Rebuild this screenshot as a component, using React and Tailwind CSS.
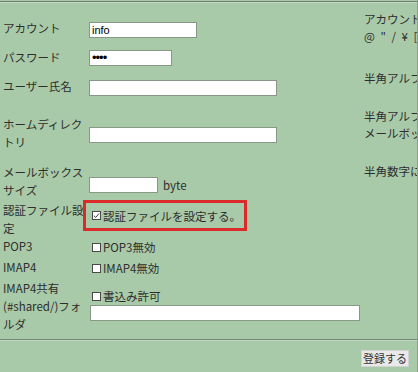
// Account settings form — green panel with a red highlight on the auth-file row.
import React from 'react'

function Check({ checked }) {
  return (
    <span className="inline-flex h-[9px] w-[9px] shrink-0 items-center justify-center border border-[#4a4a4a] bg-white">
      {checked && (
        <svg viewBox="0 0 8 8" className="h-[7px] w-[7px]" fill="none">
          <path d="M1 4.2 L3.1 6.2 L7 1.6" stroke="#333" strokeWidth="1.1" />
        </svg>
      )}
    </span>
  )
}

const field =
  "block h-[16px] border border-[#879886] bg-white px-[2px] text-[11px] text-black font-['Liberation_Sans',sans-serif] outline-none"

export default function App() {
  return (
    <div className="h-[372px] w-[418px] overflow-hidden border-r border-[#8b9d89] bg-[#a9caa8] font-['Noto_Sans_CJK_JP',sans-serif] text-[11.5px] text-[#2e2e2e]">
      <div className="mt-px h-px bg-[#6f806e]" />
      <div className="h-px bg-[#c3dac2]" />

      <div className="flex">
        <div className="w-[364px] shrink-0 leading-[18px]">
          <div className="flex h-[41px]">
            <div className="mt-[16px] w-[83px] whitespace-nowrap pl-[3px]">アカウント</div>
            <div className="ml-[6px] mt-[19px]">
              <input className={`${field} w-[108px]`} defaultValue="info" readOnly />
            </div>
          </div>

          <div className="flex h-[29px]">
            <div className="mt-[4px] w-[83px] whitespace-nowrap pl-[3px]">パスワード</div>
            <div className="ml-[6px] mt-[6px]">
              <input
                type="password"
                className={`${field} w-[83px] !text-[13px] tracking-[-1px]`}
                defaultValue="abcd"
                readOnly
              />
            </div>
          </div>

          <div className="flex h-[35px]">
            <div className="mt-[4px] w-[83px] whitespace-nowrap pl-[3px]">ユーザー氏名</div>
            <div className="ml-[6px] mt-[7px]">
              <input className={`${field} w-[188px]`} readOnly />
            </div>
          </div>

          <div className="flex h-[50px]">
            <div className="mt-[7px] w-[83px] whitespace-nowrap pl-[3px]">
              ホームディレク<br />トリ
            </div>
            <div className="ml-[6px] mt-[19px]">
              <input className={`${field} w-[188px]`} readOnly />
            </div>
          </div>

          <div className="flex h-[40px]">
            <div className="mt-[5px] w-[83px] whitespace-nowrap pl-[3px]">
              メールボックス<br />サイズ
            </div>
            <div className="ml-[6px] mt-[14px] flex items-center gap-[5px]">
              <input className={`${field} w-[69px]`} readOnly />
              <span>byte</span>
            </div>
          </div>

          <div className="flex h-[38px]">
            <div className="mt-[3px] w-[83px] whitespace-nowrap pl-[3px]">
              認証ファイル設<br />定
            </div>
            <div className="mt-[2px] flex h-[31px] w-[164px] items-center gap-[2px] border-[3px] border-[#dc2a2b] pl-[6px]">
              <Check checked />
              <span className="whitespace-nowrap">認証ファイルを設定する。</span>
            </div>
          </div>

          <div className="flex h-[21px]">
            <div className="mt-px w-[83px] whitespace-nowrap pl-[3px]">POP3</div>
            <div className="ml-[9px] mt-px flex items-center gap-[2px]">
              <Check />
              <span>POP3無効</span>
            </div>
          </div>

          <div className="flex h-[21px]">
            <div className="mt-px w-[83px] whitespace-nowrap pl-[3px]">IMAP4</div>
            <div className="ml-[9px] mt-px flex items-center gap-[2px]">
              <Check />
              <span>IMAP4無効</span>
            </div>
          </div>

          <div className="flex h-[56px]">
            <div className="mt-px w-[83px] whitespace-nowrap pl-[3px]">
              IMAP4共有<br />(#shared/)フォ<br />ルダ
            </div>
            <div className="mt-[10px]">
              <div className="ml-[9px] flex items-center gap-[2px] leading-[17px]">
                <Check />
                <span>書込み許可</span>
              </div>
              <input className={`${field} ml-[7px] w-[270px]`} readOnly />
            </div>
          </div>
        </div>

        <div className="min-w-0 flex-1 overflow-hidden whitespace-nowrap leading-[17px]">
          <div className="mt-[8px]">アカウント名には次の文字は使用できません</div>
          <div className="[word-spacing:3px]">@ " / ¥ [ ] : ; | = , + * ? &lt; &gt;</div>
          <div className="mt-[25px]">半角アルファベットで入力してください</div>
          <div className="mt-[21px]">半角アルファベットで入力してください</div>
          <div>メールボックスのパスを指定します</div>
          <div className="mt-[21px]">半角数字にて入力してください</div>
        </div>
      </div>

      <div className="mt-[5px] h-px bg-[#76887a]" />
      <div className="h-px bg-[#c0d8bf]" />

      <div className="mt-[9px] flex justify-end pr-[8px]">
        <button className="h-[17px] w-[48px] border border-[#d2d2d2] bg-[#e9e9e9] text-[11px] leading-none text-[#333]">
          登録する
        </button>
      </div>
    </div>
  )
}
